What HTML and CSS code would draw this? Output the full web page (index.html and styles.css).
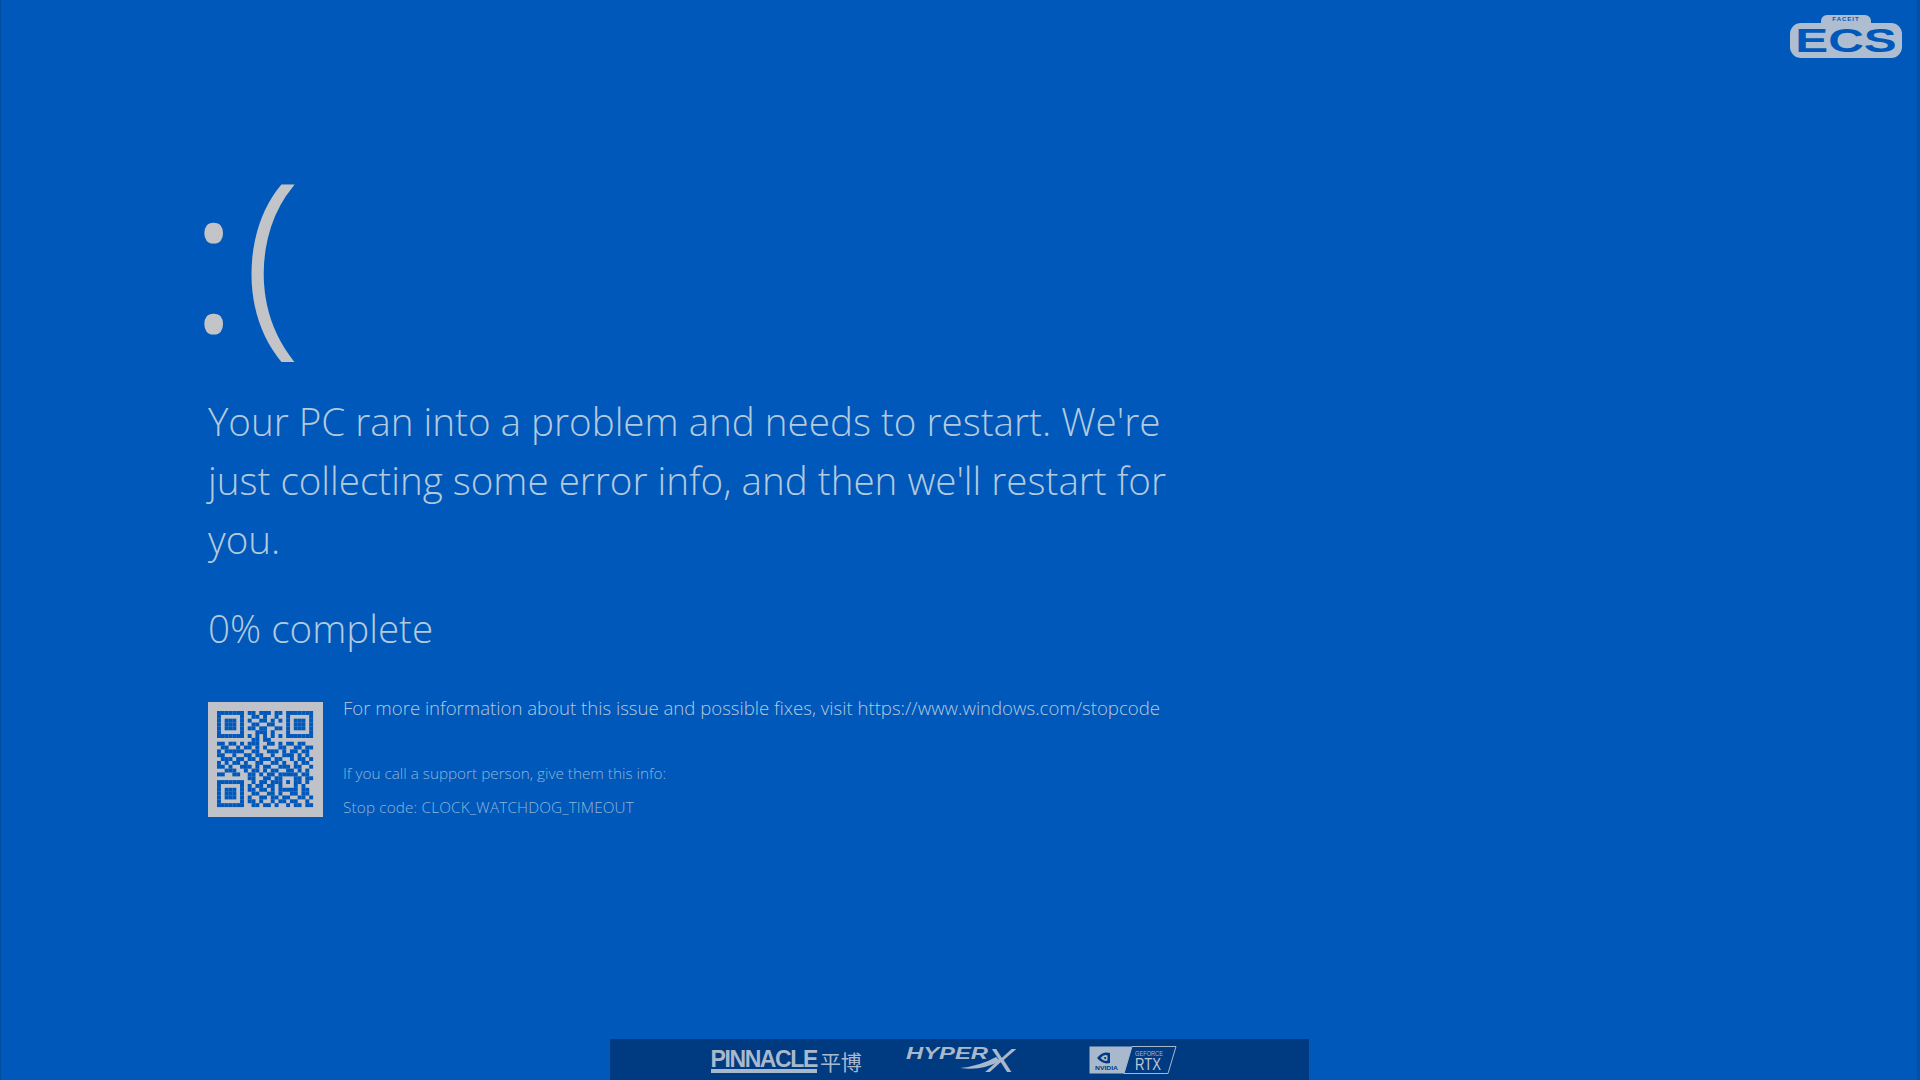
FILE: index.html
```html
<!DOCTYPE html>
<html lang="en">
<head>
  <meta charset="UTF-8" />
  <title>Your PC ran into a problem</title>
  <link rel="stylesheet" href="styles.css">
</head>
<body>

<div class="screen">

  <div class="ecs-logo">
    <div class="ecs-tab">FACEIT</div>
    <div class="ecs-body"><span class="ecs-name">ECS</span></div>
  </div>

  <div class="bsod">
    <div class="face"><span class="colon">:</span><span class="paren">(</span></div>
    <p class="headline">Your PC ran into a problem and needs to restart. We're<br>just collecting some error info, and then we'll restart for<br>you.</p>
    <p class="progress">0% complete</p>

    <div class="details">
      <svg class="qr" id="qr" viewBox="0 0 115 115" width="115" height="115"></svg>
      <div class="details-text">
        <p class="more-info">For more information about this issue and possible fixes, visit https://www.windows.com/stopcode</p>
        <p class="support">If you call a support person, give them this info:</p>
        <p class="stopcode">Stop code: CLOCK_WATCHDOG_TIMEOUT</p>
      </div>
    </div>
  </div>

  <div class="sponsors">
    <div class="pinnacle">
      <span class="pinnacle-name">PINNACLE</span>
      <span class="pinnacle-cn">平博</span>
    </div>

    <svg class="hyperx" viewBox="0 0 115 36" width="115" height="36">
      <text class="hyperx-name" x="0" y="17" textLength="82" lengthAdjust="spacingAndGlyphs">HYPER</text>
      <text class="hyperx-x" x="0" y="0" transform="translate(80 30) scale(1.8 1.4)">X</text>
      <path class="hyperx-tail" d="M90 15 Q74 24 54 26 Q76 29 94 19z"/>
    </svg>

    <svg class="rtx" viewBox="0 0 88 28" width="88" height="28">
      <polygon class="rtx-light" points="0.5,0.5 43,0.5 35,27.5 0.5,27.5"/>
      <polygon class="rtx-frame" points="43,0.5 87,0.5 79,27.5 35,27.5"/>
      <path class="rtx-eye" fill-rule="evenodd" d="M8 12 Q14 5 21 7 V17 Q14 19 8 12z M11.500 12 Q15 8 18.500 9.500 V14.500 Q15 16 11.500 12z M14.500 12 Q16 10.500 17 11 V13 Q16 13.500 14.500 12z"/>
      <text class="rtx-nvidia" x="6" y="24" textLength="23" lengthAdjust="spacingAndGlyphs">NVIDIA</text>
      <text class="rtx-geforce" x="46" y="10" textLength="28" lengthAdjust="spacingAndGlyphs">GEFORCE</text>
      <text class="rtx-name" x="46" y="24" textLength="26" lengthAdjust="spacingAndGlyphs">RTX</text>
    </svg>
  </div>

</div>

<script src="qr.js"></script>
</body>
</html>
```

FILE: styles.css
```css
html, body {
  margin: 0;
  padding: 0;
}

body {
  width: 1920px;
  height: 1080px;
  overflow: hidden;
  background-color: #0058bb;
  font-family: "Open Sans", "Noto Sans", sans-serif;
  color: #b4cadc;
}

.screen {
  position: relative;
  width: 1920px;
  height: 1080px;
  box-sizing: border-box;
  display: flex;
  flex-direction: column;
  border-left: 1px solid #004c9f;
  border-right: 3px solid #0050a8;
}

p {
  margin: 0;
}

.ecs-logo {
  position: absolute;
  top: 15px;
  right: 15px;
  width: 112px;
  display: flex;
  flex-direction: column;
  align-items: center;
  color: #0058bb;
  font-family: "Liberation Sans", sans-serif;
  font-weight: bold;
}

.ecs-tab {
  width: 50px;
  height: 8px;
  background-color: #aebdd0;
  border-radius: 6px 6px 0 0;
  font-size: 6px;
  line-height: 9px;
  letter-spacing: 1px;
  text-align: center;
}

.ecs-body {
  width: 112px;
  height: 35px;
  background-color: #aebdd0;
  border-radius: 11px;
  display: flex;
  align-items: center;
  justify-content: center;
}

.ecs-name {
  font-size: 34px;
  line-height: 35px;
  transform: scaleX(1.45);
}

.bsod {
  flex: 1;
  padding: 150px 0 0 207px;
}

.face {
  display: flex;
  align-items: flex-start;
  height: 240px;
  font-weight: 300;
  line-height: 1;
  color: #c2c4c8;
  -webkit-text-stroke: 2px #c2c4c8;
}

.colon {
  font-size: 198px;
  margin-left: -18px;
  margin-top: 5px;
  -webkit-text-stroke: 3px #c2c4c8;
}

.paren {
  font-size: 202px;
  margin-left: 7px;
  margin-top: 0;
}

.headline {
  font-size: 38.6px;
  font-weight: 300;
  line-height: 59px;
  margin-top: 2px;
}

.progress {
  font-size: 38.6px;
  font-weight: 300;
  line-height: 59px;
  margin-top: 30px;
}

.details {
  display: flex;
  gap: 20px;
  margin-top: 44px;
}

.qr {
  flex: none;
  background-color: #bfc3c9;
}

.qr rect {
  fill: #0058bb;
}

.details-text {
  margin-top: -6px;
}

.more-info {
  font-size: 18.6px;
  font-weight: 300;
  line-height: 24px;
}

.support {
  font-size: 15.3px;
  font-weight: 300;
  line-height: 20px;
  margin-top: 43px;
  color: #8fb6d8;
}

.stopcode {
  font-size: 15.3px;
  font-weight: 300;
  line-height: 20px;
  margin-top: 14px;
  letter-spacing: 0.15px;
  color: #8fb6d8;
}

.sponsors {
  flex: none;
  align-self: center;
  width: 699px;
  height: 41px;
  background-color: #003a80;
  display: flex;
  align-items: center;
  box-sizing: border-box;
  padding-left: 101px;
  color: #a9b9cd;
}

.pinnacle {
  display: flex;
  align-items: center;
  width: 195px;
  margin-top: 3px;
}

.pinnacle-name {
  font-family: "Liberation Sans", sans-serif;
  font-size: 23px;
  line-height: 20px;
  font-weight: bold;
  letter-spacing: -1.4px;
  border-bottom: 4px solid #a9b9cd;
}

.pinnacle-cn {
  font-family: "Noto Sans CJK SC", sans-serif;
  font-size: 21px;
  line-height: 22px;
  margin-left: 3px;
}

.hyperx {
  flex: none;
  margin-right: 68px;
  margin-top: 1px;
  overflow: visible;
}

.hyperx-name {
  font-family: "Liberation Sans", sans-serif;
  font-style: italic;
  font-weight: bold;
  font-size: 17px;
  fill: #a9b9cd;
}

.hyperx-x {
  font-family: "Liberation Sans", sans-serif;
  font-style: italic;
  font-size: 24px;
  fill: #a9b9cd;
}

.hyperx-tail {
  fill: #a9b9cd;
}

.rtx {
  flex: none;
}

.rtx-light {
  fill: #a9b9cd;
}

.rtx-frame {
  fill: none;
  stroke: #a9b9cd;
  stroke-width: 1;
}

.rtx-eye {
  fill: #003a80;
}

.rtx-nvidia {
  font-family: "Liberation Sans", sans-serif;
  font-size: 6px;
  font-weight: bold;
  fill: #003a80;
}

.rtx-geforce {
  font-family: "Liberation Sans", sans-serif;
  font-size: 6.5px;
  fill: #a9b9cd;
}

.rtx-name {
  font-family: "Liberation Sans", sans-serif;
  font-size: 16px;
  fill: #c0cad8;
}
```

FILE: qr.js
```js
// 25 x 25 modules, 1 = blue
var rows = [
  "1111111011011101101111111",
  "1000001001101001001000001",
  "1011101010011010101011101",
  "1011101001100110001011101",
  "1011101011011001101011101",
  "1000001000111010001000001",
  "1111111010101010101111111",
  "0000000001101100000000000",
  "1101101011100110101101100",
  "0110010110101000110011011",
  "1011111001100111010110110",
  "1100100110110010011101010",
  "0111011011011101100101101",
  "1010110100110011010010110",
  "1101001110101100111011001",
  "0011100101101011001101010",
  "1100110011010110111110110",
  "0000000011001101100011011",
  "1111111001011011101011010",
  "1000001010110110100010100",
  "1011101011011010111110110",
  "1011101001100110100110110",
  "1011101010011011011001101",
  "1000001011010010110110010",
  "1111111001101101001011011"
];

var qr = document.getElementById('qr');
var cell = 3.84;
var offset = 9;

rows.forEach(function (row, y) {
  for (var x = 0; x < row.length; x++) {
    if (row[x] === '1') {
      var rect = document.createElementNS('http://www.w3.org/2000/svg', 'rect');
      rect.setAttribute('x', offset + x * cell);
      rect.setAttribute('y', offset + y * cell);
      rect.setAttribute('width', cell + 0.1);
      rect.setAttribute('height', cell + 0.1);
      qr.appendChild(rect);
    }
  }
});
```
